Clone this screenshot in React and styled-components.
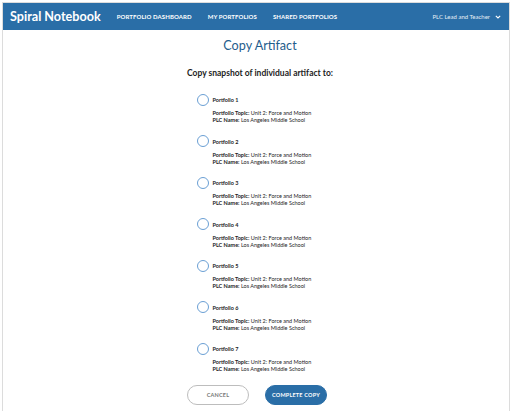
import styled, { createGlobalStyle } from "styled-components";

const GlobalStyle = createGlobalStyle`
  body {
    margin: 0;
    font-family: "Lato", "Open Sans", sans-serif;
    background: #ffffff;
  }
`;

const Frame = styled.div`
  margin: 2px 2px 0 2px;
  border: 1px solid #dcdcdc;
  border-bottom: none;
  height: 409px;
  box-sizing: border-box;
  overflow: hidden;
`;

const Header = styled.header`
  height: 27px;
  background: #2a6ea7;
  display: flex;
  align-items: center;
  padding: 0 8px 0 7px;
  color: #ffffff;
`;

const Brand = styled.div`
  font-size: 12.6px;
  font-weight: 700;
  margin-right: 16px;
`;

const NavLink = styled.span`
  font-size: 6px;
  font-weight: 700;
  text-transform: uppercase;
  margin-right: 16px;
  letter-spacing: 0.1px;
`;

const UserMenu = styled.div`
  margin-left: auto;
  display: flex;
  align-items: center;
  gap: 5px;
  font-size: 6px;
  color: #e6eef6;
`;

const Main = styled.main`
  display: flex;
  flex-direction: column;
  align-items: center;
  padding-left: 8px;
`;

const Title = styled.h1`
  margin: 8px 0 0;
  font-size: 12.6px;
  font-weight: 400;
  color: #1f5d8c;
`;

const Subtitle = styled.h2`
  margin: 15px 0 0;
  font-size: 8.5px;
  font-weight: 700;
  color: #1d1d1d;
`;

const List = styled.div`
  margin-top: 16px;
  display: flex;
  flex-direction: column;
  gap: 11.5px;
  width: 125px;
  margin-left: -2px;
`;

const Item = styled.label`
  display: grid;
  grid-template-columns: 16px 1fr;
  color: #1d1d1d;
`;

const Radio = styled.span`
  width: 10px;
  height: 10px;
  border: 1px solid #6a9fd4;
  border-radius: 50%;
  align-self: center;
  margin-top: -1px;
`;

const ItemName = styled.div`
  font-size: 5.5px;
  font-weight: 700;
  line-height: 12px;
`;

const Meta = styled.div`
  grid-column: 2;
  margin-top: 4px;
  font-size: 5.5px;
  line-height: 7px;
  b {
    font-weight: 700;
  }
`;

const Actions = styled.div`
  margin-top: 12px;
  display: flex;
  gap: 16px;
  margin-left: -6px;
`;

const Button = styled.button`
  width: 62px;
  height: 20px;
  border-radius: 10px;
  font-family: inherit;
  font-size: 5.5px;
  font-weight: 700;
  letter-spacing: 0.2px;
  text-transform: uppercase;
  border: 1px solid ${(p) => (p.primary ? "#2a6ea7" : "#bdbdbd")};
  background: ${(p) => (p.primary ? "#2a6ea7" : "#ffffff")};
  color: ${(p) => (p.primary ? "#ffffff" : "#777777")};
  padding: 0;
`;

const Chevron = () => (
  <svg width="6" height="4" viewBox="0 0 6 4">
    <path d="M0.8 0.8 L3 3 L5.2 0.8" fill="none" stroke="#ffffff" strokeWidth="1.1" />
  </svg>
);

const portfolios = [1, 2, 3, 4, 5, 6, 7];

const App = () => {
  return (
    <>
      <GlobalStyle />
      <Frame>
        <Header>
          <Brand>Spiral Notebook</Brand>
          <NavLink>Portfolio Dashboard</NavLink>
          <NavLink>My Portfolios</NavLink>
          <NavLink>Shared Portfolios</NavLink>
          <UserMenu>
            PLC Lead and Teacher
            <Chevron />
          </UserMenu>
        </Header>
        <Main>
          <Title>Copy Artifact</Title>
          <Subtitle>Copy snapshot of individual artifact to:</Subtitle>
          <List>
            {portfolios.map((n) => (
              <Item key={n}>
                <Radio />
                <ItemName>Portfolio {n}</ItemName>
                <Meta>
                  <b>Portfolio Topic:</b> Unit 2: Force and Motion
                  <br />
                  <b>PLC Name:</b> Los Angeles Middle School
                </Meta>
              </Item>
            ))}
          </List>
          <Actions>
            <Button>Cancel</Button>
            <Button primary>Complete Copy</Button>
          </Actions>
        </Main>
      </Frame>
    </>
  );
};

export default App;
